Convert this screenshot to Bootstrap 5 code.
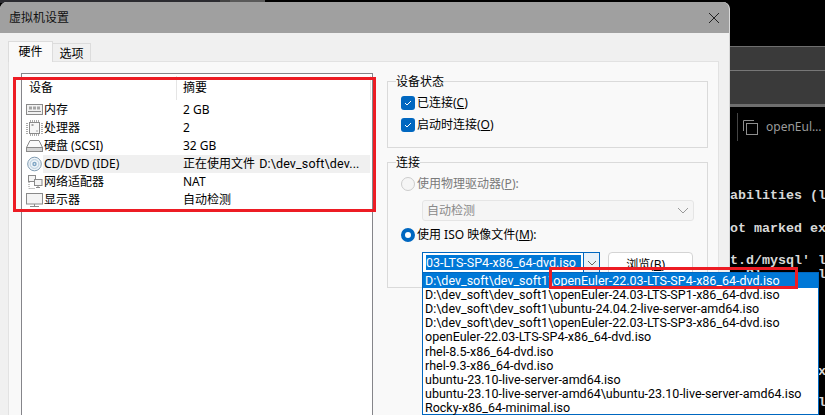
<!DOCTYPE html>
<html lang="zh-CN">
<head>
<meta charset="utf-8">
<title>虚拟机设置</title>
<link href="https://cdn.jsdelivr.net/npm/bootstrap@5.3.0/dist/css/bootstrap.min.css" rel="stylesheet">
<style>
html,body{margin:0;height:415px;overflow:hidden;background:#000}
body{font:12px/18px "Noto Sans","Noto Sans CJK SC",sans-serif;color:#000;position:relative;width:825px}
.uln{text-decoration:underline}
.lat{font-family:Roboto,sans-serif;font-size:12.5px}
/* desktop behind */
.strip{position:absolute;left:0;top:0;width:825px;height:3px;background:linear-gradient(90deg,#2b2b30 0 220px,#444 220px 230px,#5a5a5a 230px 265px,#000 265px)}
.term{position:absolute;left:730px;top:0;width:95px;height:415px;background:#000;overflow:hidden;padding-top:46px}
.tbar{height:24px;background:#3a3a3a;border-top:1px solid #6e6e6e}
.tbar2{height:37px;background:#3a3a3a;border-top:1px solid #777;border-bottom:3px solid #6e6e6e}
.ttab{height:28px;margin-top:6px;padding-left:5px;gap:4px;color:#9b9b9b;font-size:12px;border-left:1px solid #444;margin-left:7px}
.ttab svg{flex:none}
.ttab span{flex:none}
.tline{position:absolute;left:0;font:bold 13.33px/16px "Liberation Mono",monospace;color:#d8d8d8;white-space:pre}
/* dialog */
.dlg{position:absolute;left:0;top:2px;width:730px;height:413px;background:#f0f0f0;border-radius:7px 7px 0 0;overflow:hidden;border-right:1px solid #d8d8d8}
.ttl{height:31px;background:#a0a0a0;padding:0 9px;color:#111;font-size:12px}
.tabsrow{height:28px;padding:8px 0 0 8px}
.tb1,.tb2{border:1px solid #dcdcdc;border-bottom:0;text-align:center}
.tb1{width:45px;height:21px;background:#f9f9f9;line-height:19px;margin-bottom:-1px;position:relative;z-index:1}
.tb2{width:38px;height:19px;margin-top:2px;background:#f0f0f0;line-height:19px;border-left:0}
.pane{position:absolute;left:8px;top:59px;width:711px;height:360px;background:#f9f9f9;border:1px solid #e2e2e2;padding:11px 0 0 12px;gap:14px}
.devbox{width:352px;height:360px;background:#fff;border:1px solid #85858a;flex:none}
.devhead{height:27px;padding:2px 0 1px 1px;line-height:24px}
.devhead>div:first-child{width:154px;padding-left:6px;border-right:1px solid #e5e5e5}
.devhead>div:last-child{flex:1;padding-left:6px;margin-right:1px;border-right:1px solid #e5e5e5}
.devrow{height:18px;line-height:18px;padding-left:4px}
.devrow svg{flex:none;width:17px;height:16px;display:block}
.dn{width:140px;padding-left:1px;flex:none}
.dn2{margin-left:1px;letter-spacing:.15px}
.sel{background:linear-gradient(#f0f0f0,#f0f0f0) no-repeat 21px 0/327px 100%}
.rcol{width:321px;flex:none;padding-top:8px}
.grp{border:1px solid #dadada;position:relative}
.grp1{height:67px;padding:10px 0 0 13px}
.grp2{height:126px;margin-top:14px;padding:10px 0 0 13px}
.lgd{position:absolute;left:8px;top:-8px;background:#f9f9f9;padding:0;line-height:16px}
.ckrow{height:22px;gap:2px}
.ckb{width:14px;height:14px;background:#0067c0;border-radius:3px;flex:none;display:block}
.rdo{width:14px;height:14px;border-radius:50%;flex:none}
.rdo-off{border:1px solid #ccc;background:#f5f5f5}
.rdo-on{border:4px solid #0067c0;background:#fff}
.dim{color:#7a7a7a}
.fake-sel{width:272px;height:21px;margin:5px 0 3px 21px;background:#f5f5f5;border:1px solid #e5e5e5;border-radius:3px;color:#8a8a8a;padding:0 4px;line-height:19px}
.cmbrow{margin:6px 0 0 21px;gap:8px}
.cmb{width:178px;height:21px;border:1px solid #0067c0;background:#fff;overflow:hidden}
.cmbtxt{flex:1;margin:2px 2px 2px 3px;background:#0078d7;color:#fff;line-height:15px;white-space:nowrap;overflow:hidden}
.cmbbtn{width:16px;background:#e8f1f9;border-left:1px solid #0067c0}
.brw{width:85px;height:24px;background:#fff;border:1px solid #d4d4d4;border-radius:4px;text-align:center;line-height:22px;padding-top:1px}
.pop{position:absolute;left:422px;top:272px;width:397px;height:143px;background:#fff;border:1px solid #0067c0;line-height:14.15px;padding-top:1px;z-index:5;font-family:Roboto,sans-serif;font-size:12.5px}
.pop div{padding-left:2px;white-space:nowrap;height:14.15px}
.pop div.on{background:#0078d7;color:#fff;height:15px;margin-top:-1px;padding-top:1px}
.ann{position:absolute;border:3px solid #ed1c24;z-index:6;pointer-events:none}
.ann1{left:13px;top:77px;width:363px;height:135px}
.ann2{left:549px;top:267px;width:249px;height:22px}
.xbtn{width:12px;height:12px}
</style>
</head>
<body>
<div class="strip"></div>
<div class="term">
  <div class="tbar"></div>
  <div class="tbar2"></div>
  <div class="ttab d-flex align-items-center">
    <svg width="15" height="15" viewBox="0 0 15 15" fill="none" stroke="#8e8e8e"><path d="M11 .5H.5V11"/><rect x="3.500" y="3.500" width="11" height="11"/></svg>
    <span class="ms-1">openEul…</span><span style="color:#aaa" class="fw-bold">✕</span>
  </div>
  <div class="tline" style="top:188px">abilities (lo</div>
  <div class="tline" style="top:221px">ot marked exc</div>
  <div class="tline" style="top:253px">t.d/mysql' la</div>
  <div class="tline" style="top:267px">  Bl       la</div>
  <div class="tline" style="top:364px">           x</div>
  <div class="tline" style="top:395px">           l</div>
</div>

<div class="dlg">
  <div class="ttl d-flex align-items-center justify-content-between">
    <span>虚拟机设置</span>
    <svg class="xbtn" viewBox="0 0 12 12" stroke="#222" stroke-width="1"><path d="M1 1l10 10M11 1L1 11"/></svg>
  </div>
  <div class="tabsrow d-flex"><div class="tb1">硬件</div><div class="tb2">选项</div></div>
  <div class="pane d-flex">
    <div class="devbox">
      <div class="devhead d-flex"><div>设备</div><div>摘要</div></div>
      <div class="devrow d-flex align-items-center">
        <svg viewBox="0 0 17 16" fill="none" stroke="#8a8a8a"><rect x=".5" y="2.500" width="16" height="10" fill="#f2f2f2"/><path d="M2 9.500h13"/><path d="M3 4.500h3v3H3zM7 4.500h3v3H7zM11 4.500h3v3h-3z" fill="#a5a5a5" stroke="none"/></svg>
        <div class="dn">内存</div><div>2 GB</div></div>
      <div class="devrow d-flex align-items-center">
        <svg viewBox="0 0 17 16" fill="none" stroke="#8a8a8a"><rect x="3.500" y="2.500" width="10" height="11" fill="#f6f6f6"/><path stroke-dasharray="1 1" stroke-width="2" d="M1 3v11M16 3v11M4 1h10M4 15h10" stroke="#aaa"/><path d="M5.500 5h2M11.500 11h-1" stroke="#555"/></svg>
        <div class="dn">处理器</div><div>2</div></div>
      <div class="devrow d-flex align-items-center">
        <svg viewBox="0 0 17 16" fill="none" stroke="#8a8a8a"><path d="M4 2.500h9l3.500 7H.5z" fill="#fafafa"/><rect x=".5" y="9.500" width="16" height="4" fill="#d4d4d4"/></svg>
        <div class="dn">硬盘 (SCSI)</div><div>32 GB</div></div>
      <div class="devrow sel d-flex align-items-center">
        <svg viewBox="0 0 17 16" fill="none"><circle cx="8.500" cy="8" r="6.800" fill="#edf3f8" stroke="#7f9ab0"/><circle cx="8.500" cy="8" r="4.400" stroke="#b5cbdc"/><circle cx="8.500" cy="8" r="2.200" fill="#7fa5c4"/><circle cx="8.500" cy="8" r=".8" fill="#fff"/></svg>
        <div class="dn">CD/DVD (IDE)</div><div>正在使用文件 <span class="lat dn2">D:\dev_soft\dev...</span></div></div>
      <div class="devrow d-flex align-items-center">
        <svg viewBox="0 0 17 16" fill="none" stroke="#8a8a8a"><rect x="2.500" y="1.500" width="7" height="6" fill="#f4f4f4"/><rect x="8.500" y="5.500" width="7.500" height="6" fill="#f4f4f4"/><path d="M12 11.500v2M10 13.500h4"/><path d="M3 8v6.500h6" stroke-dasharray="1 1"/></svg>
        <div class="dn">网络适配器</div><div>NAT</div></div>
      <div class="devrow d-flex align-items-center">
        <svg viewBox="0 0 17 16" fill="none" stroke="#8a8a8a"><rect x=".5" y="1.500" width="16" height="10.500" fill="#f4f4f4"/><path d="M8.500 12v2M4 14.500h9"/></svg>
        <div class="dn">显示器</div><div>自动检测</div></div>
    </div>
    <div class="rcol">
      <div class="grp grp1">
        <div class="lgd">设备状态</div>
        <div class="ckrow d-flex align-items-center"><svg class="ckb" viewBox="0 0 14 14" fill="none" stroke="#fff"><path d="M4 7l2 2 4-4"/></svg><span>已连接(<span class="uln">C</span>)</span></div>
        <div class="ckrow d-flex align-items-center"><svg class="ckb" viewBox="0 0 14 14" fill="none" stroke="#fff"><path d="M4 7l2 2 4-4"/></svg><span>启动时连接(<span class="uln">O</span>)</span></div>
      </div>
      <div class="grp grp2">
        <div class="lgd">连接</div>
        <div class="ckrow d-flex align-items-center dim"><span class="rdo rdo-off"></span><span>使用物理驱动器(<span class="uln">P</span>):</span></div>
        <div class="fake-sel d-flex justify-content-between align-items-center"><span>自动检测</span><svg width="12" height="7" viewBox="0 0 12 7" fill="none" stroke="#999"><path d="M1 1l5 5 5-5"/></svg></div>
        <div class="ckrow d-flex align-items-center"><span class="rdo rdo-on"></span><span>使用 ISO 映像文件(<span class="uln">M</span>):</span></div>
        <div class="cmbrow d-flex">
          <div class="cmb d-flex"><div class="cmbtxt lat">03-LTS-SP4-x86_64-dvd.iso</div><div class="cmbbtn d-flex align-items-center justify-content-center"><svg width="10" height="6" viewBox="0 0 10 6" fill="none" stroke="#666"><path d="M1 1l4 4 4-4"/></svg></div></div>
          <div class="brw">浏览(<span class="uln">B</span>)...</div>
        </div>
      </div>
    </div>
  </div>
</div>

<div class="pop">
  <div class="on">D:\dev_soft\dev_soft1\openEuler-22.03-LTS-SP4-x86_64-dvd.iso</div>
  <div>D:\dev_soft\dev_soft1\openEuler-24.03-LTS-SP1-x86_64-dvd.iso</div>
  <div>D:\dev_soft\dev_soft1\ubuntu-24.04.2-live-server-amd64.iso</div>
  <div>D:\dev_soft\dev_soft1\openEuler-22.03-LTS-SP3-x86_64-dvd.iso</div>
  <div>openEuler-22.03-LTS-SP4-x86_64-dvd.iso</div>
  <div>rhel-8.5-x86_64-dvd.iso</div>
  <div>rhel-9.3-x86_64-dvd.iso</div>
  <div>ubuntu-23.10-live-server-amd64.iso</div>
  <div>ubuntu-23.10-live-server-amd64\ubuntu-23.10-live-server-amd64.iso</div>
  <div>Rocky-x86_64-minimal.iso</div>
</div>
<div class="ann ann1"></div>
<div class="ann ann2"></div>
<script src="https://cdn.jsdelivr.net/npm/bootstrap@5.3.0/dist/js/bootstrap.bundle.min.js"></script>
</body>
</html>
